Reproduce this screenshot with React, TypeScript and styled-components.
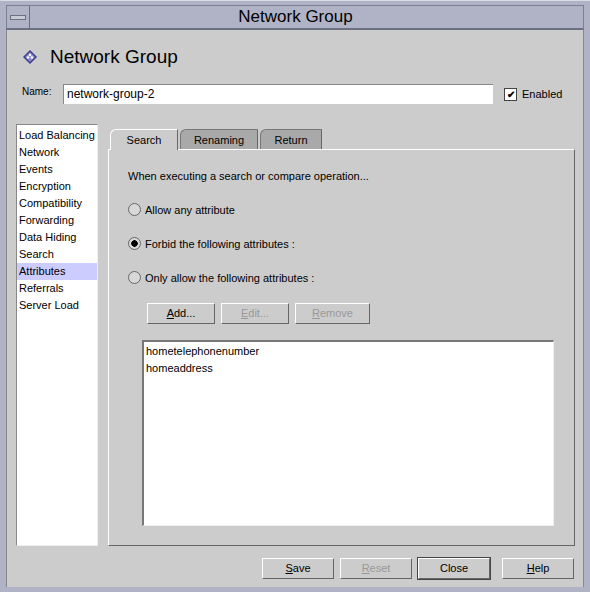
import React from "react";
import styled, { createGlobalStyle } from "styled-components";

const Global = createGlobalStyle`
  html, body { margin: 0; padding: 0; background: #cccccc; }
  body { font-family: "Liberation Sans", Arial, sans-serif; font-size: 11px; color: #000; }
`;

const Frame = styled.div`
  width: 590px;
  height: 592px;
  box-sizing: border-box;
  background: #b0b3c6;
  padding: 4px 6px 5px 6px;
  display: flex;
  flex-direction: column;
  border-top: 1px solid #d8dae4;
`;

const TitleBar = styled.div`
  height: 22px;
  display: flex;
  align-items: center;
  border: 1px solid #7c7f92;
  border-bottom: 2px solid #6c6f80;
  background: #b0b3c6;
`;

const MenuBox = styled.div`
  width: 22px;
  height: 22px;
  border-right: 1px solid #6c6f80;
  display: flex;
  align-items: center;
  justify-content: center;
  &::after { content: ""; width: 14px; height: 3px; border: 1px solid #6c6f80; background: #c8cad6; }
`;

const TitleText = styled.div`
  flex: 1;
  text-align: center;
  font-size: 17px;
  margin-right: 22px;
`;

const Body = styled.div`
  flex: 1;
  background: #cccccc;
  border-left: 1px solid #888;
  border-right: 1px solid #888;
  padding: 12px 8px 8px 9px;
  display: flex;
  flex-direction: column;
`;

const Heading = styled.div`
  display: flex;
  align-items: center;
  gap: 13px;
  font-size: 19px;
  padding-left: 7px;
  height: 30px;
`;

const NameRow = styled.div`
  display: flex;
  align-items: center;
  margin-top: 12px;
  padding-left: 6px;
`;

const Label = styled.span`
  width: 41px;
  align-self: flex-start;
  margin-top: 2px;
  font-size: 10px;
`;

const TextField = styled.div`
  width: 426px;
  height: 19px;
  background: #fff;
  border-top: 1px solid #888;
  border-left: 1px solid #888;
  font-size: 12px;
  line-height: 19px;
  padding-left: 3px;
`;

const Check = styled.span`
  margin-left: 11px;
  display: flex;
  align-items: center;
  gap: 5px;
`;

const CheckBox = styled.span`
  width: 11px;
  height: 11px;
  border: 1px solid #444;
  background: #fff;
  font-size: 10px;
  line-height: 11px;
  text-align: center;
  font-weight: bold;
`;

const Main = styled.div`
  display: flex;
  margin-top: 20px;
  flex: 1;
`;

const SideList = styled.div`
  width: 80px;
  background: #fff;
  border-top: 1px solid #888;
  border-left: 1px solid #888;
  border-right: 1px solid #eee;
  border-bottom: 1px solid #eee;
  padding-top: 2px;
  display: flex;
  flex-direction: column;
`;

const Item = styled.div<{ $sel?: boolean }>`
  height: 17px;
  line-height: 17px;
  padding-left: 2px;
  background: ${(p) => (p.$sel ? "#ccccff" : "transparent")};
`;

const TabArea = styled.div`
  flex: 1;
  margin-left: 10px;
  margin-top: 5px;
  display: flex;
  flex-direction: column;
`;

const Tabs = styled.div`
  display: flex;
  height: 20px;
  margin-left: 2px;
`;

const Tab = styled.div<{ $active?: boolean; $w: number }>`
  width: ${(p) => p.$w}px;
  box-sizing: border-box;
  height: ${(p) => (p.$active ? 21 : 20)}px;
  margin-left: ${(p) => (p.$active ? 0 : 2)}px;
  background: ${(p) => (p.$active ? "#cccccc" : "#a9a9a9")};
  border-top: 1px solid ${(p) => (p.$active ? "#fff" : "#777")};
  border-left: 1px solid ${(p) => (p.$active ? "#fff" : "#777")};
  border-right: 1px solid #666;
  border-top-left-radius: 6px;
  text-align: center;
  line-height: 20px;
  z-index: ${(p) => (p.$active ? 1 : 0)};
`;

const Panel = styled.div`
  flex: 1;
  border-top: 1px solid #fff;
  border-left: 1px solid #fff;
  border-right: 1px solid #666;
  border-bottom: 1px solid #666;
  padding: 20px 20px 19px 19px;
  display: flex;
  flex-direction: column;
`;

const Radio = styled.div<{ $on?: boolean }>`
  display: flex;
  align-items: center;
  gap: 4px;
  margin-top: 21px;
  &::before {
    content: "";
    width: 11px;
    height: 11px;
    border-radius: 50%;
    border: 1px solid #666;
    background-color: #d8d8d8;
    background-image: ${(p) => (p.$on ? "radial-gradient(circle, #000 0 3px, transparent 3.5px)" : "none")};
  }
`;

const BtnRow = styled.div`
  display: flex;
  gap: 6px;
  margin-top: 19px;
  margin-left: 19px;
`;

const Button = styled.div<{ $w: number; $off?: boolean; $def?: boolean; $extra?: number }>`
  width: ${(p) => p.$w}px;
  height: 21px;
  box-sizing: border-box;
  margin-left: ${(p) => p.$extra ?? 0}px;
  border-top: 1px solid #fff;
  border-left: 1px solid #fff;
  border-right: 1px solid #666;
  border-bottom: 1px solid #666;
  outline: ${(p) => (p.$def ? "1px solid #444" : "none")};
  text-align: center;
  line-height: 19px;
  color: ${(p) => (p.$off ? "#999" : "#000")};
`;

const ListBox = styled.div`
  flex: 1;
  margin-top: 16px;
  margin-left: 14px;
  background: #fff;
  border-top: 2px solid #777;
  border-left: 2px solid #777;
  border-right: 1px solid #eee;
  border-bottom: 1px solid #eee;
  padding: 1px 2px;
  line-height: 17px;
`;

const Footer = styled.div`
  display: flex;
  justify-content: flex-end;
  gap: 6px;
  margin-top: 12px;
  padding-right: 1px;
`;

const Gem = () => (
  <svg width="14" height="14" viewBox="0 0 14 14">
    <polygon points="7,0 14,7 7,14 0,7" fill="#3b3b8c" />
    <polygon points="7,2 12,7 7,12 2,7" fill="#8b8bd0" />
    <circle cx="7" cy="5" r="1.2" fill="#fff" />
    <circle cx="5" cy="7.5" r="1.2" fill="#fff" />
    <circle cx="9" cy="7.5" r="1.2" fill="#fff" />
  </svg>
);

export default function App() {
  const items = ["Load Balancing", "Network", "Events", "Encryption", "Compatibility", "Forwarding", "Data Hiding", "Search", "Attributes", "Referrals", "Server Load"];
  return (
    <>
      <Global />
      <Frame>
        <TitleBar>
          <MenuBox />
          <TitleText>Network Group</TitleText>
        </TitleBar>
        <Body>
          <Heading>
            <Gem />
            Network Group
          </Heading>
          <NameRow>
            <Label>Name:</Label>
            <TextField>network-group-2</TextField>
            <Check>
              <CheckBox>✔</CheckBox>
              Enabled
            </Check>
          </NameRow>
          <Main>
            <SideList>
              {items.map((i) => (
                <Item key={i} $sel={i === "Attributes"}>{i}</Item>
              ))}
            </SideList>
            <TabArea>
              <Tabs>
                <Tab $active $w={68}>Search</Tab>
                <Tab $w={78}>Renaming</Tab>
                <Tab $w={62}>Return</Tab>
              </Tabs>
              <Panel>
                <div style={{ marginTop: 0 }}>When executing a search or compare operation...</div>
                <Radio>Allow any attribute</Radio>
                <Radio $on>Forbid the following attributes :</Radio>
                <Radio>Only allow the following attributes :</Radio>
                <BtnRow>
                  <Button $w={68}><u>A</u>dd...</Button>
                  <Button $w={68} $off><u>E</u>dit...</Button>
                  <Button $w={75} $off><u>R</u>emove</Button>
                </BtnRow>
                <ListBox>
                  <div>hometelephonenumber</div>
                  <div>homeaddress</div>
                </ListBox>
              </Panel>
            </TabArea>
          </Main>
          <Footer>
            <Button $w={72}><u>S</u>ave</Button>
            <Button $w={72} $off><u>R</u>eset</Button>
            <Button $w={72} $def>Close</Button>
            <Button $w={72} $extra={6}><u>H</u>elp</Button>
          </Footer>
        </Body>
      </Frame>
    </>
  );
}
